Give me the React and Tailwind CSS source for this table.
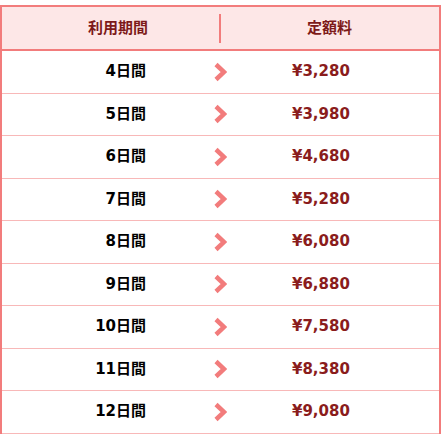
export default function App() {
  const rows = [
    ["4日間", "¥3,280"],
    ["5日間", "¥3,980"],
    ["6日間", "¥4,680"],
    ["7日間", "¥5,280"],
    ["8日間", "¥6,080"],
    ["9日間", "¥6,880"],
    ["10日間", "¥7,580"],
    ["11日間", "¥8,380"],
    ["12日間", "¥9,080"],
  ];
  const font = { fontFamily: '"DejaVu Sans", "Noto Sans CJK JP", sans-serif' };
  return (
    <div className="pt-[5px] w-[441px] bg-white" style={font}>
      <div className="border-2 border-[#f27c7c] border-b-0">
        <div className="flex items-center h-[44px] bg-[#fde7e7] border-b-2 border-[#f27c7c] text-[15px] font-bold text-[#7d1a1a]">
          <div className="w-[217px] pl-[86px] leading-none">利用期間</div>
          <div className="w-[2px] h-[29px] bg-[#f27c7c]" />
          <div className="pl-[86px] leading-none">定額料</div>
        </div>
        {rows.map(([d, p]) => (
          <div key={d} className="flex items-center h-[42.5px] border-b border-[#f8b8b8] text-[15px] font-bold">
            <div className="w-[144px] text-right text-black leading-none">{d}</div>
            <svg className="ml-[67px] shrink-0" width="14" height="20" viewBox="0 0 14 20">
              <polyline points="3,2.5 11,10 3,17.5" fill="none" stroke="#f27c7c" strokeWidth="4.5" strokeLinejoin="miter" />
            </svg>
            <div className="ml-[65px] text-[#8a1c1c] leading-none">{p}</div>
          </div>
        ))}
      </div>
    </div>
  );
}
